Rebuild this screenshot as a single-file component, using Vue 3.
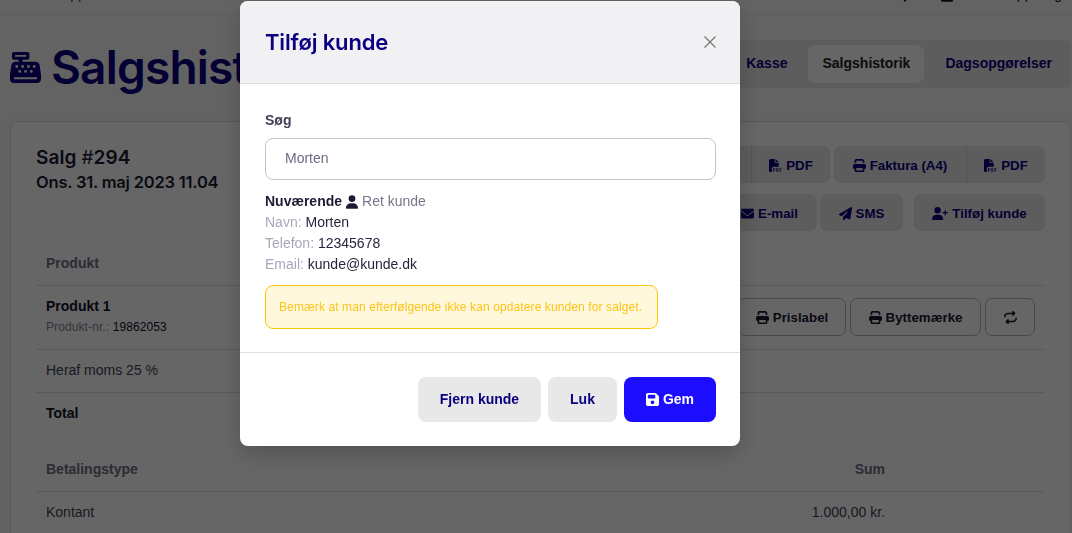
<script setup>
import { ref } from "vue";

const query = ref("Morten");

const tabs = [
    { label: "Kasse", active: false },
    { label: "Salgshistorik", active: true },
    { label: "Dagsopgørelser", active: false },
];

const customer = [
    { label: "Navn:", value: "Morten" },
    { label: "Telefon:", value: "12345678" },
    { label: "Email:", value: "kunde@kunde.dk" },
];
</script>

<template>
    <svg class="sprite" aria-hidden="true">
        <symbol id="i-print" viewBox="0 0 512 512">
            <path d="M128 0C92.700 0 64 28.700 64 64v96h64V64h226.700L384 93.300V160h64V93.300c0-17-6.700-33.300-18.700-45.300L400 18.700C388 6.700 371.700 0 354.700 0H128zm256 352v96H128v-96h256zm64 32h32c17.700 0 32-14.300 32-32v-96c0-35.300-28.700-64-64-64H64c-35.300 0-64 28.700-64 64v96c0 17.700 14.300 32 32 32h32v64c0 35.300 28.700 64 64 64h256c35.300 0 64-28.700 64-64v-64z" />
        </symbol>
        <symbol id="i-pdf" viewBox="0 0 512 512">
            <path d="M0 64C0 28.700 28.700 0 64 0h160v128c0 17.700 14.300 32 32 32h128v144H176c-35.300 0-64 28.700-64 64v144H64c-35.300 0-64-28.700-64-64V64zm384 64H256V0l128 128z" />
            <path fill="none" stroke="currentColor" stroke-width="30" d="M175 512V368h24a38 38 0 0 1 0 80h-24M303 368v128h18c22 0 34-14 34-34v-60c0-20-12-34-34-34h-18M431 512V368h58M431 434h50" />
        </symbol>
        <symbol id="i-mail" viewBox="0 0 512 512">
            <path d="M48 64C21.500 64 0 85.500 0 112c0 15.100 7.100 29.300 19.200 38.400l217.600 163.200c11.400 8.500 27 8.500 38.400 0l217.600-163.200c12.100-9.100 19.200-23.300 19.200-38.400 0-26.500-21.500-48-48-48H48zM0 176v208c0 35.300 28.700 64 64 64h384c35.300 0 64-28.700 64-64V176L294.400 339.200c-22.800 17.100-54 17.100-76.800 0L0 176z" />
        </symbol>
        <symbol id="i-send" viewBox="0 0 512 512">
            <path d="M498 6c11 7 16 19 14 32l-64 416c-2 10-8 18-16 23s-19 5-28 2l-120-50-68 74c-9 10-23 13-36 8s-20-17-20-30v-84c0-4 2-8 4-11L332 203c6-6 6-16 0-22s-16-6-22 0L106 362l-89-44C7 312 0 302 0 290s6-23 16-29L464 5c11-6 24-6 34 1z" />
        </symbol>
        <symbol id="i-user" viewBox="0 0 448 512">
            <path d="M224 256a128 128 0 1 0 0-256 128 128 0 1 0 0 256zm-45.700 48C79.800 304 0 383.800 0 482.300 0 498.700 13.300 512 29.700 512h388.600c16.400 0 29.700-13.300 29.700-29.700C448 383.800 368.200 304 269.700 304h-91.400z" />
        </symbol>
        <symbol id="i-user-plus" viewBox="0 0 640 512">
            <path d="M224 256a128 128 0 1 0 0-256 128 128 0 1 0 0 256zm-45.700 48C79.800 304 0 383.800 0 482.300 0 498.700 13.300 512 29.700 512h388.600c16.400 0 29.700-13.300 29.700-29.700C448 383.800 368.200 304 269.700 304h-91.400zM504 312v-64h-64c-13.300 0-24-10.700-24-24s10.700-24 24-24h64v-64c0-13.300 10.700-24 24-24s24 10.700 24 24v64h64c13.300 0 24 10.700 24 24s-10.700 24-24 24h-64v64c0 13.300-10.700 24-24 24s-24-10.700-24-24z" />
        </symbol>
        <symbol id="i-repeat" viewBox="0 0 512 512">
            <path d="M0 224c0 17.700 14.300 32 32 32s32-14.300 32-32c0-53 43-96 96-96h160v32c0 12.900 7.800 24.600 19.800 29.600s25.700 2.200 34.900-6.900l64-64c12.500-12.500 12.500-32.800 0-45.300l-64-64c-9.200-9.200-22.900-11.900-34.900-6.900S320 19.100 320 32v32H160C71.600 64 0 135.600 0 224zm512 64c0-17.700-14.300-32-32-32s-32 14.300-32 32c0 53-43 96-96 96H192v-32c0-12.900-7.800-24.600-19.800-29.600s-25.700-2.200-34.900 6.900l-64 64c-12.500 12.500-12.500 32.800 0 45.300l64 64c9.200 9.200 22.900 11.900 34.900 6.900s19.800-16.600 19.800-29.600v-32h160c88.400 0 160-71.600 160-160z" />
        </symbol>
        <symbol id="i-save" viewBox="0 0 448 512">
            <path fill-rule="evenodd" d="M64 32C28.700 32 0 60.700 0 96v320c0 35.300 28.700 64 64 64h320c35.300 0 64-28.700 64-64V173.300c0-17-6.700-33.300-18.700-45.300L352 50.700C340 38.700 323.700 32 306.700 32H64zm0 96c0-17.700 14.300-32 32-32h192c17.700 0 32 14.300 32 32v64c0 17.700-14.300 32-32 32H96c-17.700 0-32-14.300-32-32v-64zm160 160a64 64 0 1 1 0 128 64 64 0 1 1 0-128z" />
        </symbol>
        <symbol id="i-register" viewBox="0 0 512 512">
            <path fill-rule="evenodd" d="M64 0C46.300 0 32 14.300 32 32v64c0 17.700 14.300 32 32 32h80v32H87c-31.600 0-58.500 23.100-63.300 54.400L1.100 364.100C.4 368.800 0 373.600 0 378.400V448c0 35.300 28.700 64 64 64h384c35.300 0 64-28.700 64-64v-69.600c0-4.800-.4-9.600-1.100-14.400l-22.700-149.600C483.500 183.100 456.600 160 425 160H208v-32h80c17.700 0 32-14.300 32-32V32c0-17.700-14.300-32-32-32H64zm32 48h160c8.800 0 16 7.200 16 16s-7.200 16-16 16H96c-8.800 0-16-7.200-16-16s7.200-16 16-16zM64 432c0-8.800 7.200-16 16-16h352c8.800 0 16 7.200 16 16s-7.200 16-16 16H80c-8.800 0-16-7.200-16-16z M112 216a24 24 0 1 1 0 48 24 24 0 1 1 0-48z M208 216a24 24 0 1 1 0 48 24 24 0 1 1 0-48z M304 216a24 24 0 1 1 0 48 24 24 0 1 1 0-48z M400 216a24 24 0 1 1 0 48 24 24 0 1 1 0-48z M160 296a24 24 0 1 1 0 48 24 24 0 1 1 0-48z M256 296a24 24 0 1 1 0 48 24 24 0 1 1 0-48z M352 296a24 24 0 1 1 0 48 24 24 0 1 1 0-48z" />
        </symbol>
    </svg>

    <div class="page">
        <div class="topbar">
            <span class="topbar__link">Kundeapp</span>
            <div class="topbar__user">
                <svg class="topbar__pin" viewBox="0 0 10 14"><path d="M0 5a5 5 0 0 1 10 0c0 3-3 6-5 9-2-3-5-6-5-9z" /></svg>
                <svg class="topbar__avatar"><use href="#i-user" /></svg>
                <span>Kasseapp salg</span>
            </div>
        </div>

        <div class="heading">
            <h1 class="heading__title">
                <svg class="heading__icon"><use href="#i-register" /></svg>
                Salgshistorik
            </h1>
            <nav class="tabs">
                <a v-for="tab in tabs" :key="tab.label" class="tabs__item" :class="{ 'tabs__item--active': tab.active }">{{ tab.label }}</a>
            </nav>
        </div>

        <main class="card">
            <div class="sale">
                <div class="sale__title">
                    <h2>Salg <span class="sale__hash">#</span>294</h2>
                    <h3>Ons. 31. maj 2023 11.04</h3>
                </div>
                <div class="sale__actions">
                    <div class="row">
                        <div class="group">
                            <a class="btn btn--bon"><svg class="icon"><use href="#i-print" /></svg>Bon</a>
                            <a class="btn btn--pdf"><svg class="icon"><use href="#i-pdf" /></svg>PDF</a>
                        </div>
                        <div class="group">
                            <a class="btn btn--invoice"><svg class="icon"><use href="#i-print" /></svg>Faktura (A4)</a>
                            <a class="btn btn--pdf"><svg class="icon"><use href="#i-pdf" /></svg>PDF</a>
                        </div>
                    </div>
                    <div class="row">
                        <a class="btn btn--mail"><svg class="icon"><use href="#i-mail" /></svg>E-mail</a>
                        <a class="btn btn--sms"><svg class="icon"><use href="#i-send" /></svg>SMS</a>
                        <a class="btn btn--add"><svg class="icon icon--wide"><use href="#i-user-plus" /></svg>Tilføj kunde</a>
                    </div>
                </div>
            </div>

            <div class="line line--head">Produkt</div>
            <div class="line line--product">
                <div>
                    <b>Produkt 1</b>
                    <small><span class="muted">Produkt-nr.:</span> 19862053</small>
                </div>
                <div class="line__actions">
                    <a class="btn btn--outline btn--price"><svg class="icon"><use href="#i-print" /></svg>Prislabel</a>
                    <a class="btn btn--outline btn--swap"><svg class="icon"><use href="#i-print" /></svg>Byttemærke</a>
                    <a class="btn btn--outline btn--repeat"><svg class="icon"><use href="#i-repeat" /></svg></a>
                </div>
            </div>
            <div class="line">Heraf moms 25 %</div>
            <div class="line line--total"><b>Total</b></div>

            <div class="line line--head line--payment"><span>Betalingstype</span><span class="line__sum">Sum</span></div>
            <div class="line line--last"><span>Kontant</span><span class="line__sum">1.000,00 kr.</span></div>
        </main>
    </div>

    <div class="backdrop">
        <section class="modal" role="dialog" aria-label="Tilføj kunde">
            <header class="modal__header">
                <h2 class="modal__title">Tilføj kunde</h2>
                <svg class="modal__close" viewBox="0 0 12 12"><path d="M.5.5l11 11M11.500.5l-11 11" /></svg>
            </header>
            <div class="modal__body">
                <label class="modal__label" for="search">Søg</label>
                <input id="search" v-model="query" class="modal__input" type="text" />
                <div class="customer">
                    <div class="customer__head">
                        <b>Nuværende</b>
                        <svg class="customer__icon"><use href="#i-user" /></svg>
                        <span class="customer__edit">Ret kunde</span>
                    </div>
                    <div v-for="item in customer" :key="item.label">
                        <span class="customer__label">{{ item.label }}</span> {{ item.value }}
                    </div>
                </div>
                <div class="notice">Bemærk at man efterfølgende ikke kan opdatere kunden for salget.</div>
            </div>
            <footer class="modal__footer">
                <button class="action action--remove">Fjern kunde</button>
                <button class="action action--close">Luk</button>
                <button class="action action--save"><svg class="action__icon"><use href="#i-save" /></svg>Gem</button>
            </footer>
        </section>
    </div>
</template>

<style>
body {
    overflow: hidden;
    background: #f8f8fa;
}
</style>

<style scoped>
* {
    box-sizing: border-box;
}

h1,
h2,
h3 {
    margin: 0;
    font-family: Inter, sans-serif;
    font-weight: 600;
}

svg {
    fill: currentColor;
    flex: none;
}

.sprite {
    position: absolute;
    width: 0;
    height: 0;
}

.page {
    height: 533px;
    overflow: hidden;
    color: #3f3f55;
    font: 14px/21px "Liberation Sans", Arial, sans-serif;
}

.topbar {
    height: 15px;
    display: flex;
    align-items: flex-start;
    justify-content: space-between;
    padding: 0 10px 0 22px;
    border-bottom: 1px solid #ececee;
    line-height: 18px;
}

.topbar__link,
.topbar__user {
    margin-top: -15px;
}

.topbar__link {
    color: #0b5a84;
}

.topbar__user {
    display: flex;
    color: #12122b;
}

.topbar__pin {
    width: 10px;
    height: 14px;
    margin: 3px 31px 0 0;
}

.topbar__avatar {
    width: 12px;
    height: 14px;
    margin: 3px 17px 0 0;
}

.heading {
    height: 106px;
    padding: 25px 1px 0 10px;
    display: flex;
    justify-content: space-between;
    align-items: flex-start;
}

.heading__title {
    display: flex;
    align-items: center;
    gap: 10px;
    height: 55px;
    color: #0b0080;
    font-size: 46px;
    letter-spacing: -0.8px;
}

.heading__icon {
    width: 31px;
    height: 31px;
}

.tabs {
    display: flex;
    gap: 6px;
    padding: 5px 4px;
    border-radius: 8px;
    background: #e8e8e8;
}

.tabs__item {
    height: 38px;
    padding: 0 15px;
    border-radius: 8px;
    color: #0b0080;
    font-weight: 700;
    line-height: 36px;
}

.tabs__item--active {
    padding: 0 14px;
    background: #fff;
    color: #222;
}

.card {
    height: 440px;
    margin: 0 1px 0 10px;
    padding: 24px 25px;
    border: 1px solid #dedee2;
    border-radius: 8px;
    background: #fff;
    box-shadow: 0 0 16px rgba(0, 0, 0, 0.04);
}

.sale {
    display: flex;
    justify-content: space-between;
    height: 97px;
    color: #1b1b35;
}

.sale h2 {
    font-size: 19px;
    line-height: 24px;
    letter-spacing: 0.1px;
}

.sale__hash {
    font-weight: 400;
}

.sale h3 {
    font-size: 16.500px;
    line-height: 24px;
    letter-spacing: -0.2px;
}

.sale__actions,
.row {
    display: flex;
}

.sale__actions {
    flex-direction: column;
    gap: 11px;
}

.row {
    justify-content: flex-end;
    gap: 4px;
}

.group {
    display: flex;
    overflow: hidden;
    border-radius: 7px;
}

.btn {
    display: flex;
    align-items: center;
    justify-content: center;
    gap: 4px;
    height: 37px;
    padding-top: 1px;
    border-radius: 7px;
    background: #e8e8e8;
    color: #0b0080;
    font-size: 13.300px;
    font-weight: 700;
}

.group .btn {
    border-radius: 0;
}

.group .btn + .btn {
    border-left: 1px solid #cfcfcf;
}

.icon {
    width: 13px;
    height: 13px;
}

.icon--wide {
    width: 16px;
}

.btn--bon {
    width: 90px;
}

.btn--pdf {
    width: 79px;
}

.btn--invoice {
    width: 132px;
}

.btn--mail {
    width: 95px;
    margin-right: -1px;
}

.btn--sms {
    width: 83px;
}

.btn--add {
    width: 131px;
    margin-left: 7px;
}

.btn--outline {
    height: 38px;
    padding-top: 0;
    border: 1px solid #b9b9bf;
    background: #fff;
    color: #1b1b35;
}

.btn--price {
    width: 108px;
}

.btn--swap {
    width: 131px;
}

.btn--repeat {
    width: 50px;
}

.line {
    display: flex;
    justify-content: space-between;
    height: 43px;
    padding: 10px;
    border-bottom: 1px solid #dedee2;
}

.line--head {
    color: #6e6e84;
    font-weight: 700;
}

.line--product {
    height: 64px;
}

.line b,
.line small {
    display: block;
    color: #12122b;
}

.line small {
    font-size: 12px;
    letter-spacing: 0.1px;
}

.line small .muted {
    color: #85859a;
}

.line__actions {
    display: flex;
    gap: 4px;
    margin-top: 2px;
}

.line--total,
.line--last {
    border-bottom-color: transparent;
}

.line--payment {
    height: 56px;
    padding-top: 23px;
}

.line__sum {
    margin-right: 150px;
}

.backdrop {
    position: fixed;
    inset: 0;
    padding-top: 1px;
    background: rgba(0, 0, 0, 0.6);
}

.modal {
    width: 500px;
    height: 445px;
    margin: 0 auto;
    margin-left: 240px;
    overflow: hidden;
    border-radius: 8px;
    background: #fff;
    box-shadow: 0 8px 24px rgba(0, 0, 0, 0.2);
    color: #26263d;
    font: 14px/21px "Liberation Sans", Arial, sans-serif;
}

.modal__header {
    display: flex;
    align-items: center;
    justify-content: space-between;
    height: 83px;
    padding: 0 24px 0 25px;
    border-bottom: 1px solid #dfdfe2;
    background: #f1f1f4;
}

.modal__title {
    color: #0b0080;
    font-size: 22px;
    letter-spacing: -0.15px;
}

.modal__close {
    width: 12px;
    height: 12px;
    stroke: #777;
    stroke-width: 1.2;
}

.modal__body {
    height: 269px;
    padding: 26px 24px 0 25px;
    border-bottom: 1px solid #dfdfe2;
}

.modal__label {
    display: block;
    margin-bottom: 7px;
    color: #3f3f55;
    font-weight: 700;
}

.modal__input {
    display: block;
    width: 100%;
    height: 42px;
    padding: 0 19px 2px;
    border: 1px solid #c4c4c8;
    border-radius: 8px;
    color: #6b6b82;
    font: inherit;
}

.customer {
    margin: 11px 0 10px;
}

.customer__head {
    display: flex;
    align-items: center;
    gap: 4px;
}

.customer__icon {
    width: 12px;
    height: 14px;
}

.customer b,
.customer__icon {
    color: #1b1b35;
}

.customer__edit {
    color: #77778c;
}

.customer__label {
    color: #a7a7bb;
}

.notice {
    width: 393px;
    padding: 0 13px;
    border: 1px solid #fcc900;
    border-radius: 8px;
    background: #fff8dc;
    color: #fcc419;
    font-size: 12px;
    line-height: 42px;
    letter-spacing: 0.11px;
    white-space: nowrap;
}

.modal__footer {
    display: flex;
    justify-content: flex-end;
    gap: 7px;
    padding: 24px 24px 0;
}

.action {
    display: flex;
    align-items: center;
    justify-content: center;
    gap: 4px;
    height: 45px;
    padding: 0;
    border: 0;
    border-radius: 8px;
    background: #e8e8e8;
    color: #0b0080;
    font: inherit;
    font-weight: 700;
}

.action--remove {
    width: 123px;
}

.action--close {
    width: 69px;
}

.action--save {
    width: 92px;
    background: #1c0dff;
    color: #fff;
}

.action__icon {
    width: 13px;
    height: 15px;
}
</style>
